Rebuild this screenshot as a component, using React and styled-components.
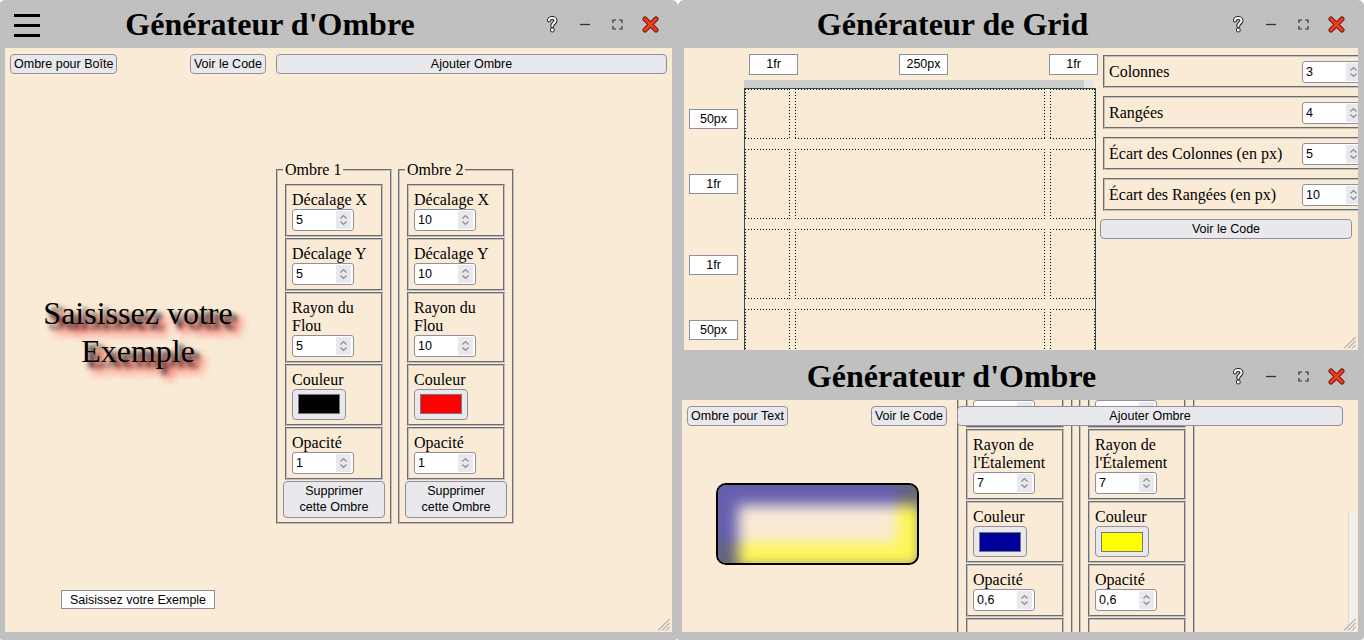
import React, { useLayoutEffect, useRef } from 'react'
import styled, { createGlobalStyle } from 'styled-components'

const SANS = `"Liberation Sans", Arial, sans-serif`
const SERIF = `"Liberation Serif", "Times New Roman", serif`

const GlobalStyle = createGlobalStyle`
  html, body {
    margin: 0;
    padding: 0;
  }
  body {
    width: 1364px;
    height: 640px;
    overflow: hidden;
    font-family: ${SERIF};
    color: #000;
    background: #fff;
  }
`

const Desktop = styled.div`
  position: relative;
  width: 1364px;
  height: 640px;
  overflow: hidden;
`

const Window = styled.section`
  position: absolute;
  left: ${p => p.$x}px;
  top: ${p => p.$y}px;
  width: ${p => p.$w}px;
  height: ${p => p.$h}px;
  z-index: ${p => p.$z};
  box-sizing: border-box;
  display: flex;
  flex-direction: column;
  padding: 0 6px 8px 6px;
  background: #c0c0c0;
  border-radius: 6px 6px 4px 4px;
`

const TitleBar = styled.header`
  position: relative;
  flex: none;
  height: 48px;
  display: flex;
  align-items: center;
`

const Title = styled.h1`
  flex: 1;
  margin: 0;
  text-align: center;
  font: bold 32px/1 ${SERIF};
  color: #000;
`

const MenuButton = styled.span`
  position: absolute;
  left: 9px;
  top: 14px;
  width: 26px;
  height: 23px;
  display: flex;
  flex-direction: column;
  justify-content: space-between;

  i {
    display: block;
    height: 3px;
    background: #000;
  }
`

const WindowControls = styled.div`
  display: flex;
  padding-right: 5px;
`

const ControlButton = styled.span`
  width: 33px;
  height: 24px;
  display: flex;
  align-items: center;
  justify-content: center;
`

const Body = styled.div`
  position: relative;
  flex: 1;
  min-height: 0;
  overflow: hidden;
  background: #faebd7;
`

const Grip = styled.svg`
  position: absolute;
  right: 2px;
  bottom: 1px;
`

const ScrollThumb = styled.div`
  position: absolute;
  right: 2px;
  top: 112px;
  bottom: 2px;
  width: 7px;
  background: #f3f0ec;
  border-left: 1px solid #dcdcdc;
`

/* ---------- shadow generator ---------- */

const ShadowLayout = styled.div`
  height: 100%;
  box-sizing: border-box;
  display: grid;
  grid-template-columns: ${p => p.$left}px 1fr;
  column-gap: 10px;
  padding: 0 ${p => p.$right}px 0 5px;
`

const Column = styled.div`
  min-height: 0;
  display: flex;
  flex-direction: column;
  padding-top: ${p => p.$top}px;
`

const Toolbar = styled.div`
  display: flex;
  justify-content: space-between;
`

const Button = styled.button`
  box-sizing: border-box;
  height: ${p => (p.$tall ? 37 : 20)}px;
  width: ${p => p.$width || 'auto'};
  margin: 0;
  padding: 0 ${p => (p.$tall ? 8 : 3)}px;
  font: 12.5px/16px ${SANS};
  color: #000;
  background: #e9e9ed;
  border: 1px solid #8f8f9d;
  border-radius: 4px;
  white-space: ${p => (p.$tall ? 'normal' : 'nowrap')};
`

const Preview = styled.div`
  flex: 1;
  display: flex;
  align-items: center;
  justify-content: center;
  padding-bottom: ${p => p.$bottom || 0}px;
`

const PreviewText = styled.p`
  margin: 0;
  font: 32px/38px ${SERIF};
  text-align: center;
  text-shadow: 5px 5px 5px rgba(0, 0, 0, 1), 10px 10px 10px rgba(255, 0, 0, 1);
`

const PreviewBox = styled.div`
  box-sizing: border-box;
  width: 203px;
  height: 82px;
  border: 2px solid #000;
  border-radius: 10px;
  background: #faebd7;
  box-shadow: inset 12px 12px 14px 8px rgba(0, 0, 153, 0.6),
    inset -12px -12px 14px 8px rgba(255, 255, 0, 0.6);
`

const ExampleInput = styled.input`
  align-self: center;
  box-sizing: border-box;
  width: 154px;
  height: 19px;
  margin: 0 0 23px;
  padding: 0;
  font: 12.5px ${SANS};
  text-align: center;
  background: #fff;
  border: 1px solid #8f8f9d;
  outline: none;
`

const ShadowList = styled.div`
  flex: 1;
  display: flex;
  gap: 6px;
  align-items: ${p => p.$align};
  padding-top: ${p => p.$top || 0}px;
  padding-bottom: ${p => p.$bottom || 0}px;
`

const ShadowSet = styled.fieldset`
  box-sizing: border-box;
  width: 116px;
  min-width: 0;
  margin: 0;
  padding: 5px 5px 4px;
  border: 2px groove #c0c0c0;
`

const Legend = styled.legend`
  padding: 0 2px;
  font: 16px/18px ${SERIF};
`

const Field = styled.div`
  box-sizing: border-box;
  margin: 0 2px 1px;
  padding: 5px 5px 4px;
  border: 2px groove #c0c0c0;
  display: flex;
  flex-direction: column;
  align-items: flex-start;
`

const FieldLabel = styled.label`
  font: 16px/18px ${SERIF};
`

const NumberBox = styled.div`
  box-sizing: border-box;
  width: ${p => p.$w || 62}px;
  flex: none;
  height: 22px;
  display: flex;
  align-items: center;
  padding: 0 2px 0 3px;
  background: #fff;
  border: 1px solid #8f8f9d;
  border-radius: 3px;
  font: 12.5px ${SANS};
`

const NumberValue = styled.span`
  flex: 1;
`

const Spinner = styled.span`
  width: 15px;
  height: 18px;
  display: flex;
  align-items: center;
  justify-content: center;
  background: #e9e9ed;
`

const ColorButton = styled.div`
  box-sizing: border-box;
  width: 54px;
  height: 31px;
  display: flex;
  align-items: center;
  justify-content: center;
  background: #e9e9ed;
  border: 1px solid #8f8f9d;
  border-radius: 4px;
`

const Swatch = styled.span`
  box-sizing: border-box;
  width: 42px;
  height: 20px;
  background: ${p => p.$color};
  border: 1px solid #777;
`

const CheckBox = styled.span`
  display: block;
  box-sizing: border-box;
  width: 13px;
  height: 13px;
  margin: 16px 0 8px;
  background: #fff;
  border: 1px solid #8f8f9d;
  border-radius: 2px;
`

/* ---------- grid generator ---------- */

const GridLayout = styled.div`
  height: 100%;
  display: flex;
`

const GridArea = styled.div`
  flex: none;
  width: 416px;
  box-sizing: border-box;
  display: grid;
  grid-template-columns: 49px 352px;
  column-gap: 6px;
  align-content: start;
  padding-left: 5px;
`

const TrackRow = styled.div`
  grid-column: 2;
  display: flex;
  gap: 101px;
  padding: 6px 0 0 5px;
`

const TrackInput = styled.div`
  box-sizing: border-box;
  flex: none;
  width: 49px;
  height: ${p => p.$h}px;
  text-align: center;
  font: 12.5px ${SANS};
  line-height: ${p => p.$h - 2}px;
  background: #fff;
  border: 1px solid #8f8f9d;
`

const Ruler = styled.div`
  grid-column: 2;
  margin-top: 5px;
  height: 8px;
  width: 350px;
  background: linear-gradient(to right, #cdcdcd 340px, #e6e6e6 340px);
`

const RowTracks = styled.div`
  grid-column: 1;
  display: grid;
  grid-template-rows: 49px 81px 81px 49px;
  align-items: center;
  padding-top: 6px;
`

const LayoutGrid = styled.div`
  grid-column: 2;
  width: 350px;
  height: 270px;
  display: grid;
  grid-template-columns: 1fr 250px 1fr;
  grid-template-rows: 50px 1fr 1fr 50px;
  gap: 10px 5px;
  border: 1px solid #2f4f4f;
`

const dotsX = 'repeating-linear-gradient(to right, #000 0 1px, transparent 1px 3px)'
const dotsY = 'repeating-linear-gradient(to bottom, #000 0 1px, transparent 1px 3px)'

const GridCell = styled.div`
  background:
    ${dotsX} left top / 100% 1px no-repeat,
    ${dotsX} left bottom / 100% 1px no-repeat,
    ${dotsY} left top / 1px 100% no-repeat,
    ${dotsY} right top / 1px 100% no-repeat;
`

const SettingsPanel = styled.div`
  flex: none;
  width: 272px;
  display: flex;
  flex-direction: column;
  align-items: flex-start;
  gap: 8px;
  padding: 7px 0 0 1px;
`

const SettingRow = styled.div`
  box-sizing: border-box;
  width: 268px;
  height: 33px;
  margin-left: 2px;
  padding: 0 5px 0 4px;
  display: flex;
  align-items: center;
  justify-content: space-between;
  border: 2px groove #c0c0c0;
`

const SettingLabel = styled.span`
  font: 16px ${SERIF};
`

/* ---------- small drawings ---------- */

const Chevrons = () => (
  <svg width="9" height="14" viewBox="0 0 9 14">
    <path d="M1.5 5.5 L4.5 2.5 L7.5 5.5 M1.5 8.5 L4.5 11.5 L7.5 8.5" fill="none" stroke="#8a8a8a" strokeWidth="1.2" />
  </svg>
)

const HelpIcon = () => (
  <svg width="12" height="18" viewBox="0 0 12 18">
    <path d="M3 5.5 C3 2.2 9.5 2.2 9.5 5.5 C9.5 8.2 6.3 8 6.3 11" fill="none" stroke="#222" strokeWidth="4" strokeLinecap="round" />
    <path d="M3 5.5 C3 2.2 9.5 2.2 9.5 5.5 C9.5 8.2 6.3 8 6.3 11" fill="none" stroke="#fff" strokeWidth="2" strokeLinecap="round" />
    <circle cx="6.3" cy="15" r="2" fill="#fff" stroke="#222" strokeWidth="1" />
  </svg>
)

const MinIcon = () => (
  <svg width="12" height="12" viewBox="0 0 12 12">
    <line x1="1" y1="6.5" x2="11" y2="6.5" stroke="#333" strokeWidth="1.3" />
  </svg>
)

const MaxIcon = () => (
  <svg width="11" height="11" viewBox="0 0 11 11">
    <path d="M1 4 V1 H4 M7 1 H10 V4 M10 7 V10 H7 M4 10 H1 V7" fill="none" stroke="#333" strokeWidth="1.2" />
  </svg>
)

const CloseIcon = () => (
  <svg width="17" height="17" viewBox="0 0 17 17">
    <path d="M3 3 L14 14 M14 3 L3 14" stroke="#6b1a0c" strokeWidth="5" strokeLinecap="round" />
    <path d="M3 3 L14 14 M14 3 L3 14" stroke="#f23d1d" strokeWidth="3" strokeLinecap="round" />
  </svg>
)

const ResizeGrip = () => (
  <Grip width="13" height="13" viewBox="0 0 13 13">
    <path d="M12.5 1 L1 12.5 M12.5 5 L5 12.5 M12.5 9 L9 12.5" stroke="#8a8a8a" strokeWidth="1" />
  </Grip>
)

const Controls = () => (
  <WindowControls>
    <ControlButton><HelpIcon /></ControlButton>
    <ControlButton><MinIcon /></ControlButton>
    <ControlButton><MaxIcon /></ControlButton>
    <ControlButton><CloseIcon /></ControlButton>
  </WindowControls>
)

const NumberField = ({ value, w }) => (
  <NumberBox $w={w}>
    <NumberValue>{value}</NumberValue>
    <Spinner><Chevrons /></Spinner>
  </NumberBox>
)

/* ---------- data ---------- */

const boxShadows = [
  { x: 5, y: 5, blur: 5, color: '#000000', opacity: '1' },
  { x: 10, y: 10, blur: 10, color: '#ff0000', opacity: '1' },
]

const insetShadows = [
  { x: 10, y: 10, blur: 15, spread: 7, color: '#000099', opacity: '0,6' },
  { x: -10, y: -10, blur: 15, spread: 7, color: '#ffff00', opacity: '0,6' },
]

const ShadowCard = ({ index, shadow, withSpread, spreadRef }) => (
  <ShadowSet>
    <Legend>Ombre {index}</Legend>
    <Field>
      <FieldLabel>Décalage X</FieldLabel>
      <NumberField value={shadow.x} />
    </Field>
    <Field>
      <FieldLabel>Décalage Y</FieldLabel>
      <NumberField value={shadow.y} />
    </Field>
    <Field>
      <FieldLabel>Rayon du Flou</FieldLabel>
      <NumberField value={shadow.blur} />
    </Field>
    {withSpread && (
      <Field ref={spreadRef}>
        <FieldLabel>Rayon de l'Étalement</FieldLabel>
        <NumberField value={shadow.spread} />
      </Field>
    )}
    <Field>
      <FieldLabel>Couleur</FieldLabel>
      <ColorButton><Swatch $color={shadow.color} /></ColorButton>
    </Field>
    <Field>
      <FieldLabel>Opacité</FieldLabel>
      <NumberField value={shadow.opacity} />
    </Field>
    {withSpread && (
      <Field>
        <CheckBox />
      </Field>
    )}
    <Button $tall $width="100%">Supprimer cette Ombre</Button>
  </ShadowSet>
)

/* ---------- windows ---------- */

const BoxShadowWindow = () => (
  <Window $x={-1} $y={0} $w={679} $h={640} $z={1}>
    <TitleBar>
      <MenuButton><i /><i /><i /></MenuButton>
      <Title>Générateur d'Ombre</Title>
      <Controls />
    </TitleBar>
    <Body>
      <ShadowLayout $left={256} $right={5}>
        <Column $top={6}>
          <Toolbar>
            <Button>Ombre pour Boîte</Button>
            <Button>Voir le Code</Button>
          </Toolbar>
          <Preview>
            <PreviewText>Saisissez votre Exemple</PreviewText>
          </Preview>
          <ExampleInput defaultValue="Saisissez votre Exemple" />
        </Column>
        <Column $top={6}>
          <Button $width="100%">Ajouter Ombre</Button>
          <ShadowList $align="center" $bottom={22}>
            {boxShadows.map((s, i) => (
              <ShadowCard key={i} index={i + 1} shadow={s} />
            ))}
          </ShadowList>
        </Column>
      </ShadowLayout>
      <ResizeGrip />
    </Body>
  </Window>
)

const ScrollPane = styled.div`
  position: relative;
  height: 100%;
  overflow: hidden;
  display: flex;
  flex-direction: column;
`

const StickyBar = styled.div`
  position: sticky;
  top: 6px;
  z-index: 2;
  margin-top: 6px;
  flex: none;
`

const TextShadowWindow = () => {
  const paneRef = useRef(null)
  const spreadRef = useRef(null)

  useLayoutEffect(() => {
    const pane = paneRef.current
    const target = spreadRef.current
    if (!pane || !target) return
    const offset = target.getBoundingClientRect().top - pane.getBoundingClientRect().top
    pane.scrollTop = offset - 29
  }, [])

  return (
    <Window $x={676} $y={352} $w={688} $h={288} $z={3}>
      <TitleBar>
        <Title>Générateur d'Ombre</Title>
        <Controls />
      </TitleBar>
      <Body>
        <ShadowLayout $left={260} $right={15}>
          <Column $top={6}>
            <Toolbar>
              <Button>Ombre pour Text</Button>
              <Button>Voir le Code</Button>
            </Toolbar>
            <Preview $bottom={10}>
              <PreviewBox />
            </Preview>
          </Column>
          <ScrollPane ref={paneRef}>
            <StickyBar>
              <Button $width="100%">Ajouter Ombre</Button>
            </StickyBar>
            <ShadowList $align="flex-start" $top={60}>
              {insetShadows.map((s, i) => (
                <ShadowCard
                  key={i}
                  index={i + 1}
                  shadow={s}
                  withSpread
                  spreadRef={i === 0 ? spreadRef : undefined}
                />
              ))}
            </ShadowList>
          </ScrollPane>
        </ShadowLayout>
        <ScrollThumb />
        <ResizeGrip />
      </Body>
    </Window>
  )
}

const columns = ['1fr', '250px', '1fr']
const rows = ['50px', '1fr', '1fr', '50px']

const settings = [
  { label: 'Colonnes', value: 3 },
  { label: 'Rangées', value: 4 },
  { label: 'Écart des Colonnes (en px)', value: 5 },
  { label: 'Écart des Rangées (en px)', value: 10 },
]

const GridWindow = () => (
  <Window $x={678} $y={0} $w={686} $h={358} $z={2}>
    <TitleBar>
      <Title>Générateur de Grid</Title>
      <Controls />
    </TitleBar>
    <Body>
      <GridLayout>
        <GridArea>
          <TrackRow>
            {columns.map((c, i) => (
              <TrackInput key={i} $h={21}>{c}</TrackInput>
            ))}
          </TrackRow>
          <Ruler />
          <RowTracks>
            {rows.map((r, i) => (
              <TrackInput key={i} $h={20}>{r}</TrackInput>
            ))}
          </RowTracks>
          <LayoutGrid>
            {Array.from({ length: 12 }, (_, i) => (
              <GridCell key={i} />
            ))}
          </LayoutGrid>
        </GridArea>
        <SettingsPanel>
          {settings.map(s => (
            <SettingRow key={s.label}>
              <SettingLabel>{s.label}</SettingLabel>
              <NumberField value={s.value} />
            </SettingRow>
          ))}
          <Button $width="252px" style={{ marginLeft: -1 }}>Voir le Code</Button>
        </SettingsPanel>
      </GridLayout>
      <ResizeGrip />
    </Body>
  </Window>
)

const App = () => (
  <>
    <GlobalStyle />
    <Desktop>
      <BoxShadowWindow />
      <GridWindow />
      <TextShadowWindow />
    </Desktop>
  </>
)

export default App
